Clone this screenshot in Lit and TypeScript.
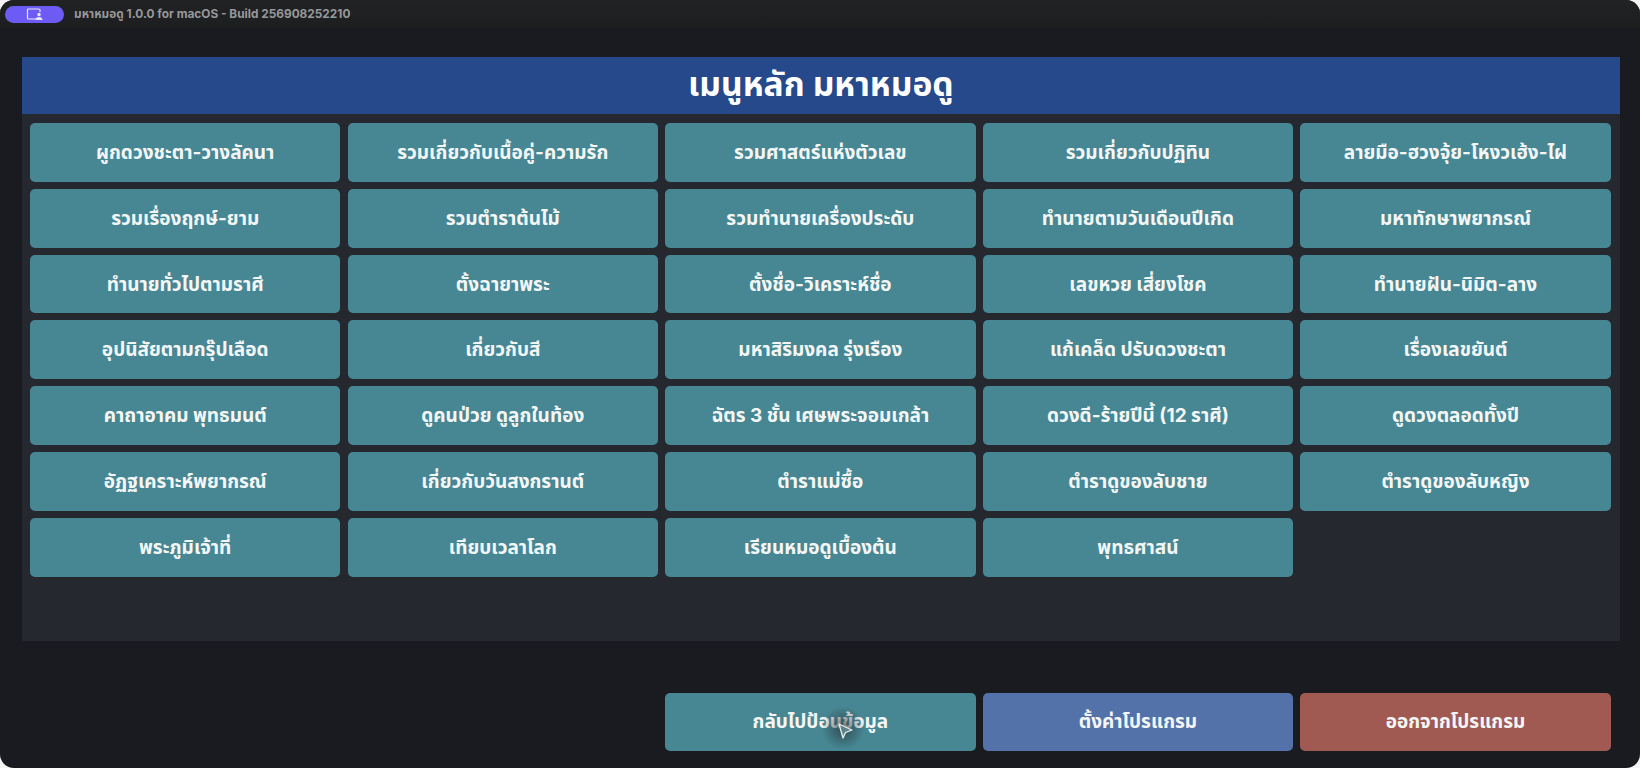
import { LitElement, html, css } from "lit";
import { customElement } from "lit/decorators.js";

const ITEMS = [
  "ผูกดวงชะตา-วางลัคนา","รวมเกี่ยวกับเนื้อคู่-ความรัก","รวมศาสตร์แห่งตัวเลข","รวมเกี่ยวกับปฏิทิน","ลายมือ-ฮวงจุ้ย-โหงวเฮ้ง-ไฝ",
  "รวมเรื่องฤกษ์-ยาม","รวมตำราต้นไม้","รวมทำนายเครื่องประดับ","ทำนายตามวันเดือนปีเกิด","มหาทักษาพยากรณ์",
  "ทำนายทั่วไปตามราศี","ตั้งฉายาพระ","ตั้งชื่อ-วิเคราะห์ชื่อ","เลขหวย เสี่ยงโชค","ทำนายฝัน-นิมิต-ลาง",
  "อุปนิสัยตามกรุ๊ปเลือด","เกี่ยวกับสี","มหาสิริมงคล รุ่งเรือง","แก้เคล็ด ปรับดวงชะตา","เรื่องเลขยันต์",
  "คาถาอาคม พุทธมนต์","ดูคนป่วย ดูลูกในท้อง","ฉัตร 3 ชั้น เศษพระจอมเกล้า","ดวงดี-ร้ายปีนี้ (12 ราศี)","ดูดวงตลอดทั้งปี",
  "อัฏฐเคราะห์พยากรณ์","เกี่ยวกับวันสงกรานต์","ตำราแม่ซื้อ","ตำราดูของลับชาย","ตำราดูของลับหญิง",
  "พระภูมิเจ้าที่","เทียบเวลาโลก","เรียนหมอดูเบื้องต้น","พุทธศาสน์",
];

@customElement("app-root")
export class AppRoot extends LitElement {
  static styles = css`
    :host { display: block; width: 1640px; height: 768px; background: #f4f4f4; overflow: hidden;
      font-family: "Inter", "Noto Sans Thai", "Noto Sans", "DejaVu Sans", sans-serif; }
    .win { position: relative; height: 768px; box-sizing: border-box; border-radius: 14px; overflow: hidden;
      background: #1a1b20; display: flex; flex-direction: column; }
    .title { height: 28px; flex: none; display: flex; align-items: center; gap: 10px; padding-left: 5px;
      background: linear-gradient(#212223, #1d1e20); }
    .pill { width: 59px; height: 17px; border-radius: 9px; background: #6c5cf5; display: flex; align-items: center; justify-content: center; }
    .apptitle { font-size: 11.85px; font-weight: 700; color: #97989a; }
    .panel { margin: 29px 20px 0 21.5px; height: 584px; flex: none; background: #262830; display: flex; flex-direction: column; }
    .head { height: 57px; flex: none; background: #25498a; color: #fff; font-size: 33.6px; font-weight: 700;
      display: flex; align-items: center; justify-content: center; }
    .grid { display: grid; grid-template-columns: repeat(5, 1fr); grid-auto-rows: 58.7px; gap: 7.15px; padding: 9px 9.3px 9px 8.5px; }
    .btn { border-radius: 5px; color: #f4f6f6; font-size: 19px; font-weight: 700; padding-top: 2px; box-sizing: border-box;
      display: flex; align-items: center; justify-content: center; background: #468793; }
    .blue { background: #5472aa; }
    .red { background: #a05a52; }
    .foot { display: grid; grid-template-columns: repeat(5, 1fr); gap: 7.15px; padding: 51.500px 29.300px 0 30px; }
    .foot .btn { height: 58.7px; }
    .s3 { grid-column: 3; } .s4 { grid-column: 4; } .s5 { grid-column: 5; }
    .cursor { position: absolute; left: 837px; top: 721px; width: 30px; height: 30px; }
    .glow { position: absolute; left: 821px; top: 706px; width: 44px; height: 44px; border-radius: 50%;
      background: radial-gradient(circle, rgba(40,50,55,.7), rgba(40,50,55,0) 70%); }
  `;
  render() {
    return html`<div class="win">
      <div class="title">
        <div class="pill"><svg width="18" height="13" viewBox="0 0 18 13" fill="none">
          <path d="M11 11H2.5A1 1 0 0 1 1.500 10V2A1 1 0 0 1 2.500 1H13A1 1 0 0 1 14 2V4" stroke="#e8e6ff" stroke-width="1.200"/>
          <circle cx="13" cy="6.500" r="1.700" fill="#e8e6ff"/><path d="M9.500 12c0-2 1.500-3 3.500-3s3.500 1 3.500 3z" fill="#e8e6ff"/>
        </svg></div>
        <div class="apptitle">มหาหมอดู 1.0.0 for macOS - Build 256908252210</div>
      </div>
      <div class="panel">
        <div class="head">เมนูหลัก มหาหมอดู</div>
        <div class="grid">${ITEMS.map((t) => html`<div class="btn">${t}</div>`)}</div>
      </div>
      <div class="foot">
        <div class="btn s3">กลับไปป้อนข้อมูล</div>
        <div class="btn blue s4">ตั้งค่าโปรแกรม</div>
        <div class="btn red s5">ออกจากโปรแกรม</div>
      </div>
      <div class="glow"></div>
      <svg class="cursor" viewBox="0 0 30 30" fill="none"><path d="M2 3L15 9L8.500 11.500L6 17Z" fill="rgba(120,160,170,.6)" stroke="#e8eeee" stroke-width="1.300" stroke-linejoin="round"/></svg>
    </div>`;
  }
}
